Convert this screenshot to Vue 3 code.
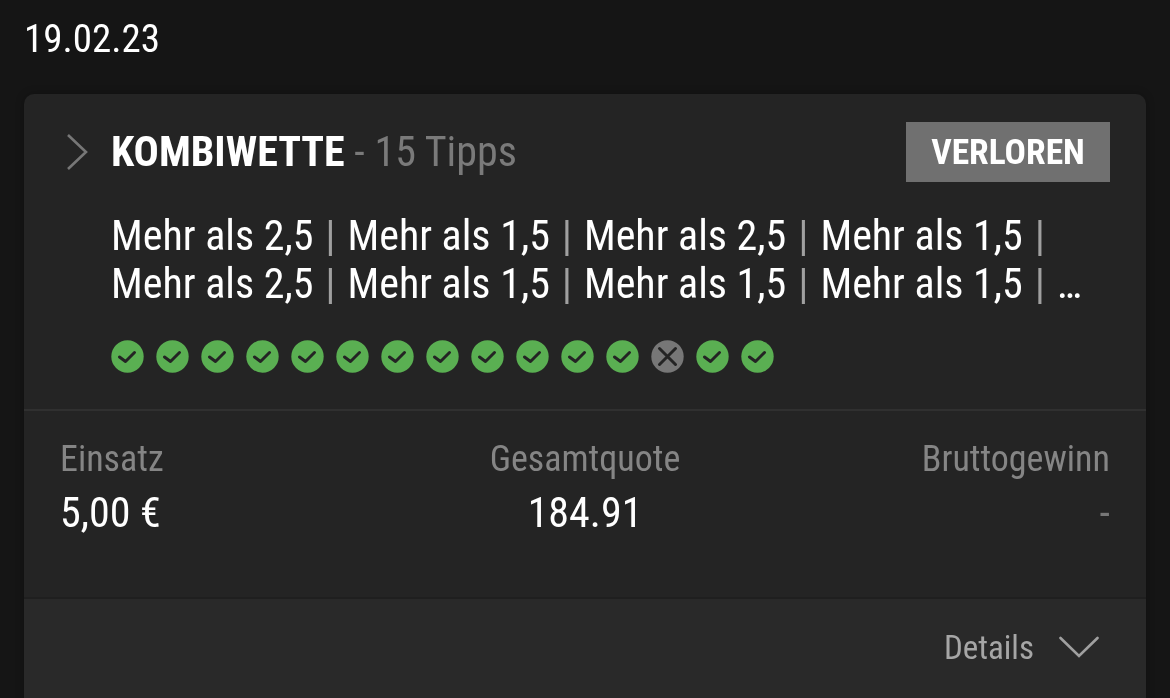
<template>
  <div class="page">
    <div class="date">19.02.23</div>
    <section class="card">
      <div class="head">
        <svg class="chevron" width="24" height="38" viewBox="0 0 24 38">
          <path d="M2 2 L20 19 L2 36" fill="none" stroke="#777" stroke-width="2.6" />
        </svg>
        <div class="title"><b>KOMBIWETTE</b><span> - 15 Tipps</span></div>
        <div class="status">VERLOREN</div>
      </div>
      <div class="picks">
        <div v-for="(line, i) in lines" :key="i">
          <template v-for="(item, j) in line" :key="j">
            <span class="sep" v-if="j">|</span>{{ item }}
          </template>
          <span class="sep">|</span>{{ i ? '…' : '' }}
        </div>
      </div>
      <div class="dots">
        <svg v-for="(ok, i) in results" :key="i" width="33" height="33" viewBox="0 0 33 33">
          <circle cx="16.5" cy="16.5" r="16.2" :fill="ok ? '#5aaf52' : '#777'" />
          <path v-if="ok" d="M8.5 17 L14.5 21.5 L23.5 12.5" fill="none" stroke="#242424" stroke-width="3" stroke-linecap="round" stroke-linejoin="round" />
          <path v-else d="M8.5 8.5 L24.5 24.5 M24.5 8.5 L8.5 24.5" fill="none" stroke="#242424" stroke-width="3" stroke-linecap="round" />
        </svg>
      </div>
      <div class="stats">
        <div class="stat">
          <div class="label">Einsatz</div>
          <div class="value">5,00 €</div>
        </div>
        <div class="stat mid">
          <div class="label">Gesamtquote</div>
          <div class="value">184.91</div>
        </div>
        <div class="stat end">
          <div class="label">Bruttogewinn</div>
          <div class="value dim">-</div>
        </div>
      </div>
      <div class="foot">
        <span>Details</span>
        <svg width="40" height="24" viewBox="0 0 40 24">
          <path d="M1.5 3 L20 21 L38.5 3" fill="none" stroke="#a0a0a0" stroke-width="2.6" stroke-linecap="round" />
        </svg>
      </div>
    </section>
  </div>
</template>

<script setup>
const lines = [
  ['Mehr als 2,5', 'Mehr als 1,5', 'Mehr als 2,5', 'Mehr als 1,5'],
  ['Mehr als 2,5', 'Mehr als 1,5', 'Mehr als 1,5', 'Mehr als 1,5'],
]
const results = Array.from({ length: 15 }, (_, i) => i !== 12)
</script>

<style>
html, body { margin: 0; background: #151515; overflow: hidden; }
</style>

<style scoped>
.page {
  height: 698px;
  overflow: hidden;
  box-sizing: border-box;
  padding: 14px 24px 0;
  font-family: "Roboto Condensed", Roboto, sans-serif;
  font-stretch: condensed;
  color: #fff;
  will-change: transform;
}
.date { font-size: 39px; line-height: 50px; margin-bottom: 30px; }
.card { background: #242424; border-radius: 10px; height: 700px; box-shadow: 0 0 9px rgba(0, 0, 0, 0.25); }
.head { display: flex; align-items: center; height: 60px; padding: 28px 36px 0 42px; }
.chevron { margin-right: 21px; }
.title { flex: 1; font-size: 42px; line-height: 60px; color: #7a7a7a; white-space: nowrap; }
.title b { color: #fff; font-weight: 700; }
.status { width: 204px; height: 60px; line-height: 60px; text-align: center; background: #707070; font-size: 35.5px; font-weight: 700; }
.picks { padding: 30px 0 0 87px; font-size: 42px; line-height: 48px; }
.picks > div { white-space: nowrap; }
.sep { color: #a0a0a0; margin: 0 11.9px; }
.dots { display: flex; gap: 12px; padding: 32px 0 0 87px; }
.stats { display: grid; grid-template-columns: 1fr auto 1fr; margin-top: 36px; padding: 27px 36px 0; height: 159px; border-top: 2px solid #303030; }
.stat { font-size: 36px; }
.mid { text-align: center; }
.end { text-align: right; }
.label { color: #858585; margin-bottom: 8px; line-height: 42px; }
.value { font-size: 42px; line-height: 50px; }
.dim { color: #777; }
.foot { display: flex; justify-content: flex-end; align-items: flex-start; gap: 25px; height: 100px; padding: 29px 47px 0 0; background: #292929; border-top: 2px solid #1f1f1f; color: #a6a6a6; font-size: 33px; line-height: 40px; }
.foot svg { margin-top: 7px; }
</style>
